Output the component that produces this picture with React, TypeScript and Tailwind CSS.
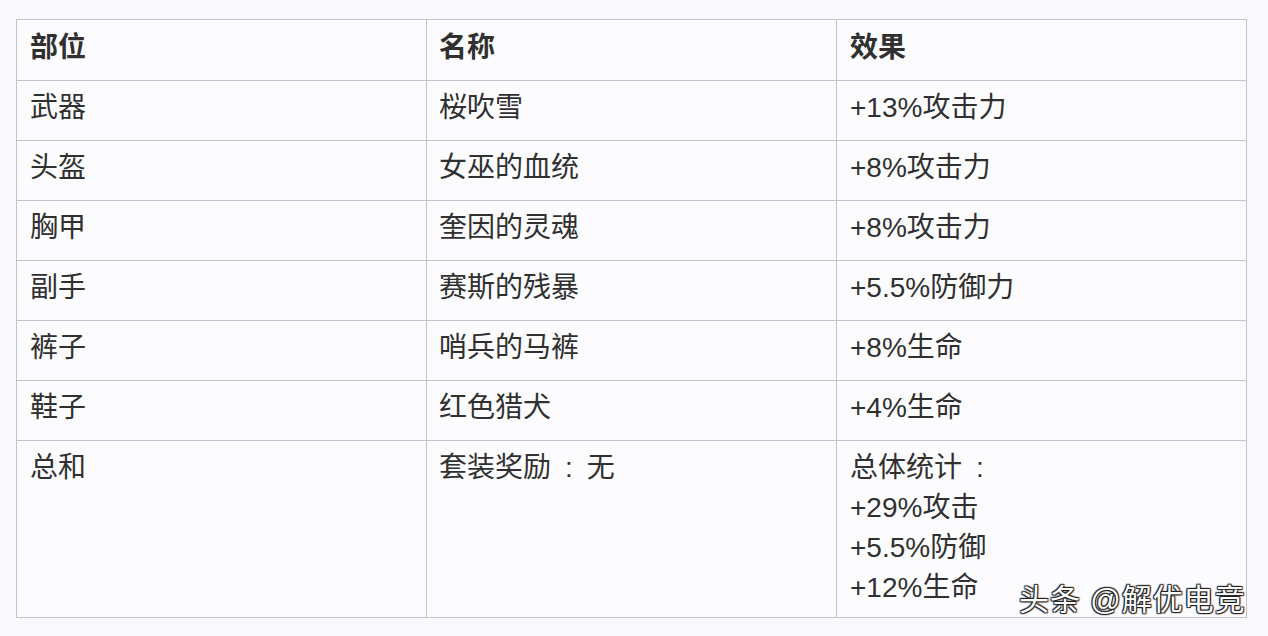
import React from "react";

const rows: [string, string, string][] = [
  ["武器", "桜吹雪", "+13%攻击力"],
  ["头盔", "女巫的血统", "+8%攻击力"],
  ["胸甲", "奎因的灵魂", "+8%攻击力"],
  ["副手", "赛斯的残暴", "+5.5%防御力"],
  ["裤子", "哨兵的马裤", "+8%生命"],
  ["鞋子", "红色猎犬", "+4%生命"],
];

const font = { fontFamily: '"Liberation Sans", "Noto Sans CJK SC", sans-serif' };

export default function App() {
  return (
    <div className="w-[1268px] h-[636px] bg-[#f9f9fb] relative overflow-hidden" style={font}>
      <div className="pt-[19px] pl-[16px]">
        <div className="w-[1231px] border border-[#c3c3c9] bg-[#fcfcfe] text-[#303030] text-[28px] leading-[40px]">
          <div className="grid grid-cols-[409px_410px_410px] h-[60px]">
            <div className="pl-[13px] pt-[8px] font-bold">部位</div>
            <div className="pl-[12px] pt-[8px] font-bold border-l border-[#c3c3c9]">名称</div>
            <div className="pl-[13px] pt-[8px] font-bold border-l border-[#c3c3c9]">效果</div>
          </div>
          {rows.map(([a, b, c]) => (
            <div key={a} className="grid grid-cols-[409px_410px_410px] h-[60px] border-t border-[#c3c3c9]">
              <div className="pl-[13px] pt-[7px]">{a}</div>
              <div className="pl-[12px] pt-[7px] border-l border-[#c3c3c9]">{b}</div>
              <div className="pl-[13px] pt-[7px] border-l border-[#c3c3c9]">{c}</div>
            </div>
          ))}
          <div className="grid grid-cols-[409px_410px_410px] h-[177px] border-t border-[#c3c3c9]">
            <div className="pl-[13px] pt-[7px]">总和</div>
            <div className="pl-[12px] pt-[7px] border-l border-[#c3c3c9]">
              套装奖励<span className="mx-[14px]">:</span>无
            </div>
            <div className="pl-[13px] pt-[7px] border-l border-[#c3c3c9] flex flex-col">
              <span>
                总体统计<span className="ml-[14px]">:</span>
              </span>
              <span>+29%攻击</span>
              <span>+5.5%防御</span>
              <span>+12%生命</span>
            </div>
          </div>
        </div>
      </div>
      <div
        className="absolute left-[1019px] top-[582px] text-[30px] leading-[36px] tracking-[1px] text-white whitespace-nowrap"
        style={{ textShadow: "0 0 1px #222, 1px 1px 1px #222, -1px -1px 1px #222, 1px -1px 1px #222, -1px 1px 1px #222" }}
      >
        头条 @解优电竞
      </div>
    </div>
  );
}
